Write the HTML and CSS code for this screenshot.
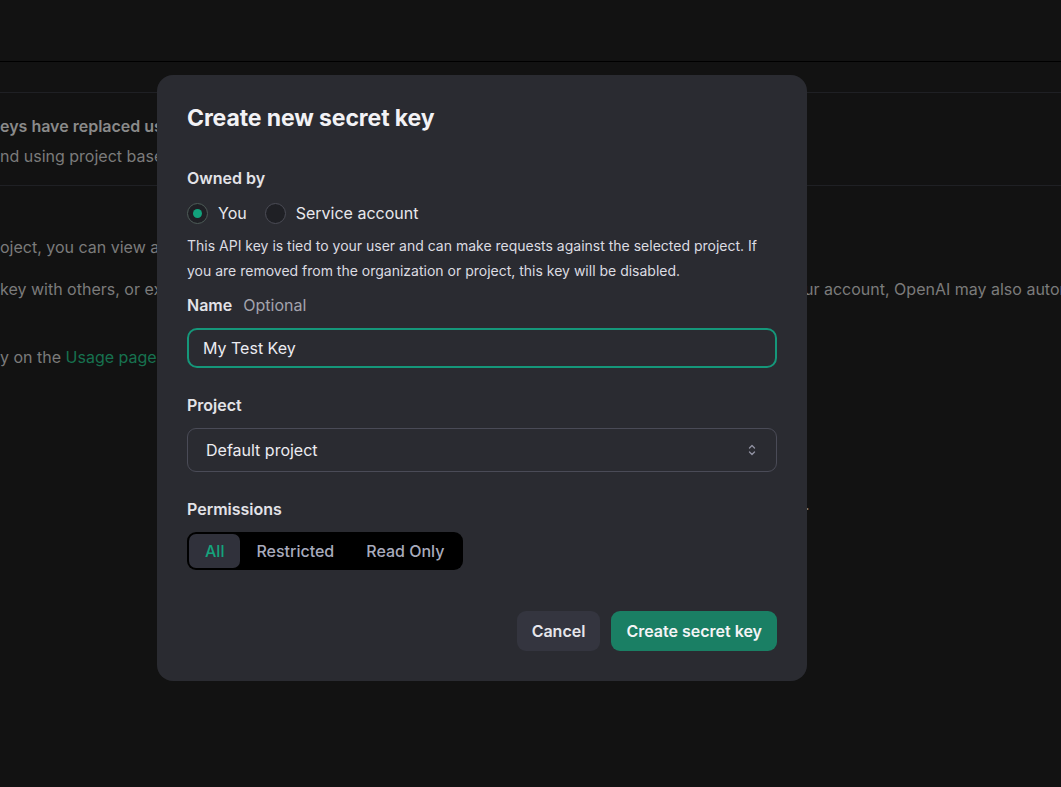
FILE: index.html
```html
<!DOCTYPE html>
<html lang="en">
<head>
<meta charset="utf-8">
<title>Create new secret key</title>
<link rel="stylesheet" href="styles.css">
</head>
<body>
<div class="page">
  <header class="topbar"></header>
  <main class="content">
    <section class="notice">
      <p class="notice-strong">eys have replaced user API keys. We recommend using project based API keys for more granular control</p>
      <p class="notice-text">nd using project based API keys for more granular control over your resources.</p>
    </section>
    <section class="body-text">
      <p class="para">oject, you can view and manage all API keys in this organization.</p>
      <p class="para row-split"><span class="split-left">key with others, or expose it in the browser or other client-side code. In order to protect the security of yo</span><span class="split-right">ur account, OpenAI may also automatically rotate any API key that we've found has leaked publicly.</span></p>
      <p class="para para-gap">y on the <a class="link" href="#">Usage page</a>.</p>
      <p class="para row-split dot-row"><span class="split-dot">&nbsp;</span><span>.</span></p>
    </section>
  </main>
</div>

<div class="overlay">
  <div class="modal" role="dialog">
    <h2 class="modal-title">Create new secret key</h2>

    <div class="field">
      <div class="label">Owned by</div>
      <div class="radios">
        <label class="radio"><span class="radio-dot checked"></span><span>You</span></label>
        <label class="radio"><span class="radio-dot"></span><span>Service account</span></label>
      </div>
      <p class="desc">This API key is tied to your user and can make requests against the selected project. If you are removed from the organization or project, this key will be disabled.</p>
    </div>

    <div class="field">
      <div class="label">Name <span class="optional">Optional</span></div>
      <div class="input">My Test Key</div>
    </div>

    <div class="field field-gap">
      <div class="label">Project</div>
      <div class="select">
        <span>Default project</span>
        <svg class="chev" width="8" height="14" viewBox="0 0 8 14" fill="none" stroke="currentColor" stroke-width="1.4" stroke-linecap="round" stroke-linejoin="round"><path d="M1.5 5 L4 2.5 L6.5 5"/><path d="M1.5 9 L4 11.5 L6.5 9"/></svg>
      </div>
    </div>

    <div class="field field-gap">
      <div class="label">Permissions</div>
      <div class="segmented">
        <span class="seg active">All</span>
        <span class="seg">Restricted</span>
        <span class="seg">Read Only</span>
      </div>
    </div>

    <div class="actions">
      <button class="btn btn-cancel">Cancel</button>
      <button class="btn btn-primary">Create secret key</button>
    </div>
  </div>
</div>
</body>
</html>
```

FILE: styles.css
```css
* { box-sizing: border-box; }

html, body {
  margin: 0;
  padding: 0;
  height: 100%;
  background: #121212;
  overflow: hidden;
  font-family: Inter, "Noto Sans", "Liberation Sans", sans-serif;
}

.page {
  height: 100%;
  overflow: hidden;
}

.topbar {
  height: 62px;
  border-bottom: 1px solid #000;
}

.content {
  padding-top: 30px;
}

.notice {
  border-top: 1px solid #1f2024;
  border-bottom: 1px solid #1f2024;
  padding: 18px 0 14px;
}

.notice p {
  margin: 0;
  white-space: nowrap;
  font-size: 16px;
  line-height: 30px;
}

.notice-strong {
  font-weight: 600;
  color: #8a8a8a;
}

.notice-text {
  color: #7b7b7b;
}

.body-text {
  padding-top: 49px;
}

.para {
  margin: 0 0 18px;
  white-space: nowrap;
  font-size: 16px;
  line-height: 24px;
  color: #7b7b7b;
}

.para-gap {
  margin-top: 44px;
}

.row-split {
  display: flex;
  overflow: hidden;
}

.split-left {
  flex: 0 0 804px;
  overflow: hidden;
}

.split-right {
  flex: 0 0 auto;
}

.dot-row {
  margin-top: 123px;
}

.split-dot {
  flex: 0 0 805px;
}

.link {
  color: #17714f;
  text-decoration: none;
}

/* Modal */
.overlay {
  position: fixed;
  inset: 0;
  display: flex;
  align-items: flex-start;
  padding: 75px 0 0 157px;
}

.modal {
  width: 650px;
  background: #2a2b31;
  border-radius: 16px;
  padding: 26px 30px 30px;
  color: #ececf1;
}

.modal-title {
  margin: 0 0 32px;
  font-size: 23px;
  line-height: 34px;
  font-weight: 700;
  letter-spacing: -0.1px;
  color: #f2f2f5;
}

.label {
  font-size: 16px;
  line-height: 22px;
  font-weight: 600;
  color: #e3e3e8;
  margin-bottom: 12px;
}

.optional {
  font-weight: 400;
  color: #a3a3ad;
  margin-left: 7px;
}

.radios {
  display: flex;
  gap: 18px;
  align-items: center;
  height: 24px;
}

.radio {
  display: flex;
  align-items: center;
  gap: 10px;
  font-size: 16px;
  color: #e8e8ec;
}

.radio-dot {
  width: 21px;
  height: 21px;
  border-radius: 50%;
  border: 1px solid #4b4c56;
  background: #1f2025;
  display: flex;
  align-items: center;
  justify-content: center;
}

.radio-dot.checked {
  border-color: #4e5c58;
}

.radio-dot.checked::after {
  content: "";
  width: 9px;
  height: 9px;
  border-radius: 50%;
  background: #12a27c;
}

.desc {
  margin: 8px 0 11px;
  font-size: 14px;
  line-height: 25px;
  color: #dcdce2;
}

.field .input {
  height: 40px;
  border: 2px solid #15977a;
  border-radius: 10px;
  padding: 0 14px;
  display: flex;
  align-items: center;
  font-size: 16px;
  color: #ececf1;
}

.field-gap {
  margin-top: 26px;
}

.select {
  height: 44px;
  border: 1px solid #4a4b57;
  border-radius: 9px;
  padding: 0 18px;
  display: flex;
  align-items: center;
  justify-content: space-between;
  font-size: 16px;
  color: #ececf1;
}

.chev {
  color: #8f90a0;
  margin-right: 2px;
}

.segmented {
  display: inline-flex;
  background: #000;
  border-radius: 9px;
  padding: 2px;
  height: 38px;
}

.seg {
  display: flex;
  align-items: center;
  padding: 0 16px;
  border-radius: 7px;
  font-size: 16px;
  font-weight: 500;
  color: #a8abbd;
}

.seg:last-child {
  padding-right: 17px;
}

.seg.active {
  background: #30313b;
  color: #15a37d;
  padding: 0 16px;
}

.actions {
  display: flex;
  justify-content: flex-end;
  gap: 11px;
  margin-top: 41px;
}

.btn {
  height: 40px;
  border: none;
  border-radius: 9px;
  padding: 0 15px;
  font-family: inherit;
  font-size: 16px;
  font-weight: 600;
  cursor: pointer;
}

.btn-cancel {
  background: #34353f;
  color: #e6e6eb;
}

.btn-primary {
  background: #1a7f64;
  color: #f4f4f6;
}
```
